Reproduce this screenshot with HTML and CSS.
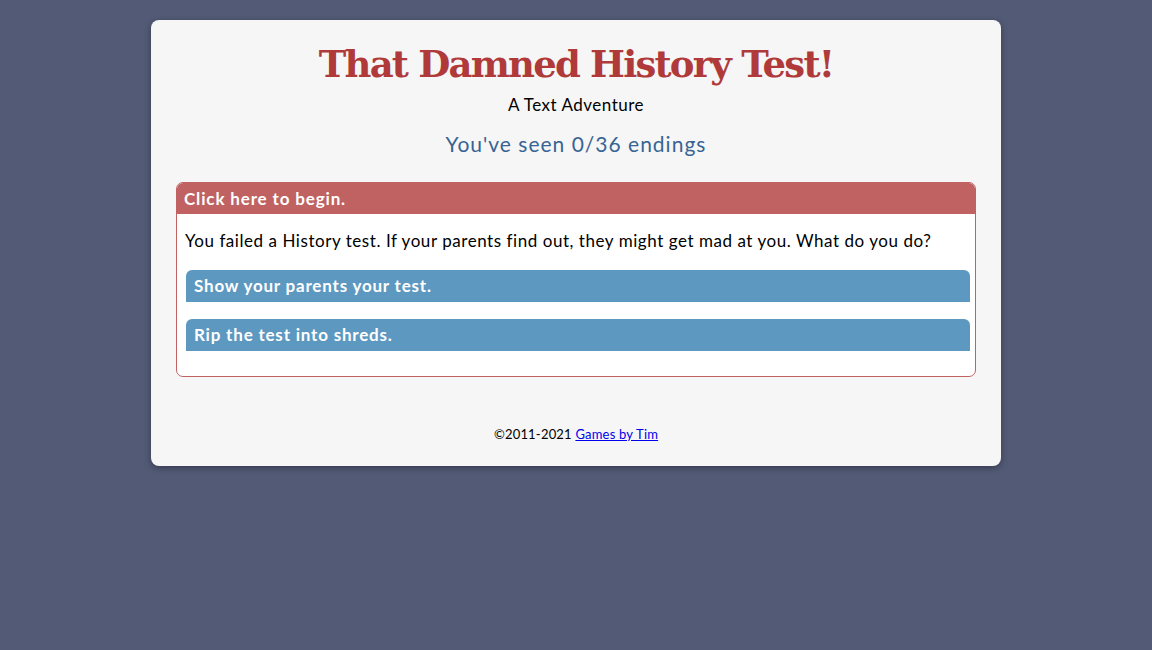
FILE: index.html
```html
<!DOCTYPE html>
<html>
<head>
<meta charset="utf-8">
<link rel="stylesheet" href="styles.css">
</head>
<body>
<div class="card">
  <h1 class="title">That Damned History Test!</h1>
  <div class="subtitle">A Text Adventure</div>
  <div class="endings">You've seen 0/36 endings</div>
  <div class="panel">
    <div class="panel-head">Click here to begin.</div>
    <div class="panel-body">
      <p class="story">You failed a History test. If your parents find out, they might get mad at you. What do you do?</p>
      <div class="choice">Show your parents your test.</div>
      <div class="choice">Rip the test into shreds.</div>
    </div>
  </div>
  <div class="footer">©2011-2021 <a href="#">Games by Tim</a></div>
</div>
</body>
</html>
```
FILE: styles.css
```css
html, body {
  margin: 0;
  padding: 0;
  background: #525a75;
  height: 100%;
}
body {
  font-family: "Lato", "Open Sans", sans-serif;
  padding-top: 20px;
}
.card {
  width: 850px;
  margin: 0 auto;
  background: #f6f6f6;
  border-radius: 8px;
  box-shadow: 0 2px 6px rgba(0,0,0,0.35);
  padding: 24px 25px 24px;
  box-sizing: border-box;
}
.title {
  margin: 0;
  text-align: center;
  font-family: "DejaVu Serif", serif;
  font-weight: bold;
  font-size: 37px;
  line-height: 40px;
  color: #b03a3a;
  letter-spacing: -1.8px;
}
.subtitle {
  text-align: center;
  font-size: 17px;
  line-height: 20px;
  margin-top: 11px;
  color: #000;
  letter-spacing: 0.5px;
}
.endings {
  text-align: center;
  font-size: 21px;
  line-height: 26px;
  margin-top: 16px;
  color: #376493;
  letter-spacing: 1px;
}
.panel {
  margin-top: 25px;
  border: 1px solid #c06262;
  border-radius: 7px;
  background: #fff;
  overflow: hidden;
}
.panel-head {
  background: #c06262;
  color: #fff;
  font-weight: bold;
  font-size: 17px;
  line-height: 31px;
  padding: 0 7px;
  letter-spacing: 0.85px;
}
.panel-body {
  padding: 0 5px 25px 9px;
}
.story {
  margin: 0;
  padding: 15px 0 18px 0;
  font-size: 17px;
  line-height: 23px;
  margin-left: -1px;
  color: #000;
  letter-spacing: 0.55px;
}
.choice {
  background: #5d98c0;
  color: #fff;
  font-weight: bold;
  font-size: 17px;
  line-height: 32px;
  padding: 0 8px;
  border-radius: 6px 6px 0 0;
  margin-bottom: 17px;
  letter-spacing: 0.8px;
}
.choice:last-child {
  margin-bottom: 0;
}
.footer {
  text-align: center;
  font-size: 13px;
  margin-top: 49px;
  line-height: 16px;
  color: #000;
  letter-spacing: 0.2px;
}
.footer a {
  color: #0000ee;
}
```
